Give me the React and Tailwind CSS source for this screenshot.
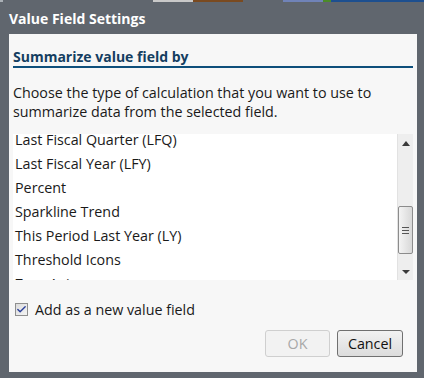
import { Check } from 'lucide-react'

const ITEMS = [
  'Last Fiscal Quarter (LFQ)',
  'Last Fiscal Year (LFY)',
  'Percent',
  'Sparkline Trend',
  'This Period Last Year (LY)',
  'Threshold Icons',
  'Zero Axis',
]

const font = { fontFamily: '"Open Sans", "Noto Sans", sans-serif' }

export default function App() {
  return (
    <div className="w-[424px] h-[378px] bg-[#60666e] flex flex-col overflow-hidden" style={font}>
      {/* strip of the window behind */}
      <div className="h-[2px] flex">
        <div className="w-[3px] bg-[#aab0b6]" />
        <div className="w-[150px] bg-[#60666e]" />
        <div className="w-[40px] bg-[#c9c9c9]" />
        <div className="w-[50px] bg-[#7a4a20]" />
        <div className="w-[40px] bg-[#60666e]" />
        <div className="w-[40px] bg-[#7083b8]" />
        <div className="w-[8px] bg-[#4c8a2a]" />
        <div className="flex-1 bg-[#1d4f8f]" />
      </div>

      <div className="h-[32px] flex items-center pl-[9px] text-white font-bold text-[14px] leading-[19px]">
        Value Field Settings
      </div>

      <div className="mr-[7px] ml-[9px] mb-[6px] flex-1 bg-[#f7f7f7] flex flex-col px-[4px]">
        <div className="pt-[13px] border-b-2 border-[#0e4f7b] text-[14px] leading-[19px] font-bold text-[#143e61]">
          Summarize value field by
        </div>

        <p className="mt-[15px] text-[14.3px] leading-[19px] text-[#1a1a1a]">
          Choose the type of calculation that you want to use to summarize data from the selected field.
        </p>

        <div className="mt-[13px] h-[146px] bg-white flex">
          <ul className="flex-1 overflow-hidden text-[14.3px] leading-[19px] text-[#1a1a1a] pl-[2px]">
            {ITEMS.map(t => (
              <li key={t} className="h-[24px] flex items-center first:-mt-[7px]">{t}</li>
            ))}
          </ul>
          {/* scrollbar */}
          <div className="w-[16px] bg-[#eeeeee] border-l border-[#e2e2e2] flex flex-col items-center pt-[7px]">
            <svg width="8" height="5" viewBox="0 0 8 5">
              <path d="M0 5 L4 0 L8 5 Z" fill="#3a3a3a" />
            </svg>
            <div className="mt-[60px] w-[15px] h-[48px] rounded-[2px] border border-[#8c8c8c] bg-gradient-to-r from-[#f4f4f4] to-[#d8d8d8] flex flex-col items-center justify-center gap-[2px]">
              <div className="w-[7px] h-[1px] bg-[#555]" />
              <div className="w-[7px] h-[1px] bg-[#555]" />
              <div className="w-[7px] h-[1px] bg-[#555]" />
            </div>
            <svg width="8" height="4" viewBox="0 0 8 4" className="mt-[16px]">
              <path d="M0 0 L4 4 L8 0 Z" fill="#3a3a3a" />
            </svg>
          </div>
        </div>

        <label className="mt-[19px] h-[20px] flex items-center gap-[7px] text-[14.3px] leading-[19px] text-[#1a1a1a] pl-[2px]">
          <span className="w-[13px] h-[13px] border border-[#8f8f8f] bg-gradient-to-br from-[#dcdcdc] to-[#f4f4f4] flex items-center justify-center">
            <Check size={11} strokeWidth={3} color="#2a3f9a" />
          </span>
          Add as a new value field
        </label>

        <div className="mt-[11px] flex justify-end gap-[7px] pr-[10px]">
          <button className="w-[65px] h-[27px] rounded-[3px] border border-[#cfcfcf] bg-[#f2f2f2] text-[14.3px] text-[#a8a8a8]">
            OK
          </button>
          <button className="w-[66px] h-[27px] rounded-[3px] border border-[#707070] bg-gradient-to-b from-[#f2f2f2] to-[#dcdcdc] text-[14.3px] text-[#111]">
            Cancel
          </button>
        </div>
      </div>
    </div>
  )
}
